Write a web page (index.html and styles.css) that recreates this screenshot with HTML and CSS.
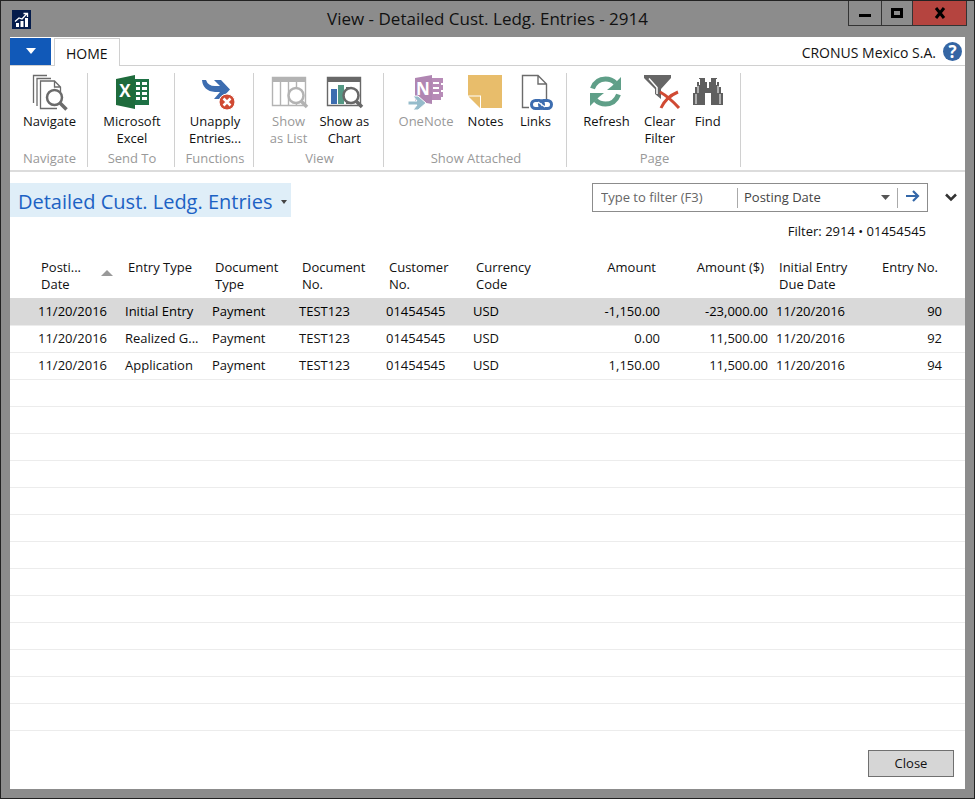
FILE: index.html
```html
<!DOCTYPE html>
<html lang="en">
<head>
  <meta charset="UTF-8">
  <meta name="viewport" content="width=device-width, initial-scale=1.0">
  <title>View - Detailed Cust. Ledg. Entries - 2914</title>
  <link rel="stylesheet" href="styles.css">
</head>
<body>
  <header class="titlebar">
    <svg class="app-icon" viewBox="0 0 19 19">
      <rect width="19" height="19" fill="#051c4b"/>
      <path d="M4 17v-4h3v4zM8.500 17v-6h3v6zM13 17V8h3v9z" fill="#fff"/>
      <path d="M3 11.500L7 8l3 1 5-5.500M11.500 3.500H15.500V7" fill="none" stroke="#fff" stroke-width="1.300"/>
    </svg>
    <h1>View - Detailed Cust. Ledg. Entries - 2914</h1>
    <div class="window-buttons">
      <button aria-label="Minimize"><svg width="12" height="8"><path d="M0 5h12v3H0z"/></svg></button>
      <button class="maximize" aria-label="Maximize"><svg width="12" height="10"><path d="M1.500 1.500h9v7h-9z" fill="none" stroke="#000" stroke-width="3"/></svg></button>
      <button class="close-x" aria-label="Close window"><svg width="10" height="10"><path d="M1 0l8 10M9 0L1 10" stroke="#000" stroke-width="3"/></svg></button>
    </div>
  </header>

  <main class="window">
    <nav class="tabs">
      <button class="app-menu" aria-label="Application menu"><svg width="10" height="6"><path d="M0 0h10L5 6z" fill="#fff"/></svg></button>
      <button class="tab">HOME</button>
      <span class="company">CRONUS Mexico S.A.</span>
      <button class="help" aria-label="Help">?</button>
    </nav>

    <div class="ribbon">
      <section class="group">
        <div class="tools">
          <button>
            <svg class="icon" viewBox="0 0 36 36" fill="none" stroke="#6b6b6b" stroke-width="1.300">
              <path d="M2.500 29V1.500H16M6 32V4.500H20M26 34.500H9.500V7H23.500L29.500 13V18M23.500 7V13H29.500"/>
              <circle cx="23.500" cy="23.500" r="7.500" fill="#fff" stroke-width="2.500"/>
              <path d="M29 29l6.500 6.500" stroke-width="3.500"/>
            </svg>
            Navigate
          </button>
        </div>
        <h2>Navigate</h2>
      </section>

      <section class="group">
        <div class="tools">
          <button>
            <svg class="icon" viewBox="0 0 36 36">
              <path d="M21 5h14v26H21z" fill="#1e7145"/>
              <path d="M22 8h4v3h-4zM28 8h5v3h-5zM22 13h4v3h-4zM28 13h5v3h-5zM22 18h4v3h-4zM28 18h5v3h-5zM22 23h4v3h-4zM28 23h5v3h-5z" fill="#fff"/>
              <path d="M2 5L21 1V35L2 31z" fill="#1e6b3c"/>
              <text x="11" y="23" class="letter">X</text>
            </svg>
            Microsoft<br>Excel
          </button>
        </div>
        <h2>Send To</h2>
      </section>

      <section class="group">
        <div class="tools">
          <button>
            <svg class="icon" viewBox="0 0 36 36">
              <path d="M5 6h4q2 6 9 6h5l-6-6h7l9 9.500-9 9.500h-7l6-7h-5Q6 17 5 6z" fill="#3d6db0"/>
              <circle cx="30" cy="28" r="8" fill="#d04a33" stroke="#fff"/>
              <path d="M26.500 24.500l7 7M33.500 24.500l-7 7" stroke="#fff" stroke-width="2.500"/>
            </svg>
            Unapply<br>Entries...
          </button>
        </div>
        <h2>Functions</h2>
      </section>

      <section class="group">
        <div class="tools">
          <button disabled>
            <svg class="icon" viewBox="0 0 36 36" fill="none" stroke="#b3b3b3">
              <path d="M1.500 3.500h33v28h-33zM9.500 8v23M17.500 8v23M25.500 8v23" stroke-width="1.400"/>
              <path d="M1 3h34v5H1z" fill="#b3b3b3" stroke="none"/>
              <circle cx="25" cy="21.500" r="7.500" fill="#fff" stroke-width="2.500"/>
              <path d="M30 27l6 6" stroke-width="3.500"/>
            </svg>
            Show<br>as List
          </button>
          <button>
            <svg class="icon" viewBox="0 0 36 36" fill="none" stroke="#686868">
              <path d="M1.500 3.500h33v28h-33z" stroke-width="1.400"/>
              <path d="M1 3h34v5H1z" fill="#686868" stroke="none"/>
              <path d="M5 15h6v15H5z" fill="#3d6db0" stroke="none"/>
              <path d="M12 11h6v19h-6z" fill="#559985" stroke="none"/>
              <path d="M20 13h6v17h-6z" fill="#686868" stroke="none"/>
              <circle cx="25" cy="21.500" r="7.500" fill="#fff" stroke-width="2.500"/>
              <path d="M30 27l6 6" stroke-width="3.500"/>
            </svg>
            Show as<br>Chart
          </button>
        </div>
        <h2>View</h2>
      </section>

      <section class="group group-attached">
        <div class="tools">
          <button disabled>
            <svg class="icon" viewBox="0 0 36 36">
              <path d="M24 4h11v5h-2v2h2v5h-2v2h2v5h-2v3h-9z" fill="#b78bb7"/>
              <path d="M25 8h6v2h-6zM25 13h6v2h-6zM25 18h6v2h-6z" fill="#fff"/>
              <path d="M7 4l17-3v29L7 27z" fill="#b086b2"/>
              <text x="15" y="21" class="letter">N</text>
              <path d="M0 27h9l-4-5h5l8 7-8 7H5l4-5H0z" fill="#96bccb" stroke="#fff"/>
            </svg>
            OneNote
          </button>
          <button>
            <svg class="icon" viewBox="0 0 36 36">
              <path d="M1 1h34v33H14V21.500H1z" fill="#e8bd6b"/>
              <path d="M1.500 22.500H13V34z" fill="#e8bd6b"/>
            </svg>
            Notes
          </button>
          <button>
            <svg class="icon" viewBox="0 0 36 36" fill="none">
              <path d="M5.500 1.500H21L29.500 10V33.500H5.500zM21 1.500V10H29.500" stroke="#6b6b6b" stroke-width="1.400"/>
              <path d="M12 25h24v11H12z" fill="#fff"/>
              <g stroke="#3d6db0" stroke-width="3">
                <rect x="14.500" y="26.500" width="12" height="8" rx="4"/>
                <rect x="22.500" y="26.500" width="12" height="8" rx="4"/>
              </g>
              <path d="M21 28l7 5" stroke="#fff" stroke-width="1.300"/>
            </svg>
            Links
          </button>
        </div>
        <h2>Show Attached</h2>
      </section>

      <section class="group">
        <div class="tools">
          <button>
            <svg class="icon" viewBox="0 0 36 36">
              <g id="arc">
                <path d="M4.500 14.500Q8 5 17.500 5q6 0 10 4" fill="none" stroke="#5f9f88" stroke-width="5"/>
                <path d="M33 3v13H19l5-4 4-4z" fill="#5f9f88"/>
              </g>
              <use href="#arc" transform="rotate(180 17.500 17.500)"/>
            </svg>
            Refresh
          </button>
          <button>
            <svg class="icon" viewBox="0 0 36 36">
              <path d="M2 1h27v3L19 15v10l-6-5v-5L2 4z" fill="#666"/>
              <path d="M7 4.500l8 9v6.500" fill="none" stroke="#fff" stroke-width="1.500"/>
              <path d="M18 18q9 5 19 16M36 18Q24 23 19 34" fill="none" stroke="#d04a33" stroke-width="3"/>
            </svg>
            Clear<br>Filter
          </button>
          <button>
            <svg class="icon" viewBox="0 0 36 36">
              <path d="M9 4h6v4h2v6h2V8h2V4h6v4h2v5h2v6h2v12H21V19h-6v12H3V19h2v-6h2V8h2z" fill="#5f5f5f"/>
              <path d="M9.500 5v6M8 12v7M6 20v10M26.500 5v6M28 12v7M30 20v10" stroke="#fff" stroke-width="1" fill="none"/>
            </svg>
            Find
          </button>
        </div>
        <h2>Page</h2>
      </section>
    </div>

    <div class="page-head">
      <button class="page-title">
        Detailed Cust. Ledg. Entries
        <svg width="6" height="4"><path d="M0 0h6L3 4z" fill="#444"/></svg>
      </button>
      <form class="filter">
        <input type="text" aria-label="Type to filter" placeholder="Type to filter (F3)">
        <div class="field">
          <select aria-label="Filter field">
            <option>Posting Date</option>
            <option>Entry Type</option>
            <option>Document Type</option>
          </select>
          <svg width="9" height="5"><path d="M0 0h9L4.500 5z" fill="#555"/></svg>
        </div>
        <button type="button" aria-label="Apply filter">
          <svg width="14" height="12" fill="none" stroke="#3467a8" stroke-width="2.200"><path d="M0 6h12M7 1l5 5-5 5"/></svg>
        </button>
      </form>
      <button class="expand" aria-label="Expand filter pane">
        <svg width="12" height="9" fill="none" stroke="#333" stroke-width="2.500"><path d="M1 1.500l5 5 5-5"/></svg>
      </button>
    </div>
    <p class="filter-info">Filter: 2914 • 01454545</p>

    <table class="entries">
      <colgroup>
        <col class="gutter">
        <col span="6">
        <col class="amount" span="2">
        <col span="2">
        <col class="rest">
      </colgroup>
      <thead>
        <tr>
          <td></td>
          <th class="sorted">Posti...<br>Date <svg width="12" height="6"><path d="M0 6h12L6 0z" fill="#999"/></svg></th>
          <th>Entry Type</th>
          <th>Document<br>Type</th>
          <th>Document<br>No.</th>
          <th>Customer<br>No.</th>
          <th>Currency<br>Code</th>
          <th class="num">Amount</th>
          <th class="num">Amount ($)</th>
          <th>Initial Entry<br>Due Date</th>
          <th class="num">Entry No.</th>
          <td></td>
        </tr>
      </thead>
      <tbody>
        <tr class="selected">
          <td></td>
          <td>11/20/2016</td>
          <td>Initial Entry</td>
          <td>Payment</td>
          <td>TEST123</td>
          <td>01454545</td>
          <td>USD</td>
          <td class="num">-1,150.00</td>
          <td class="num">-23,000.00</td>
          <td>11/20/2016</td>
          <td class="num">90</td>
          <td></td>
        </tr>
        <tr>
          <td></td>
          <td>11/20/2016</td>
          <td>Realized G...</td>
          <td>Payment</td>
          <td>TEST123</td>
          <td>01454545</td>
          <td>USD</td>
          <td class="num">0.00</td>
          <td class="num">11,500.00</td>
          <td>11/20/2016</td>
          <td class="num">92</td>
          <td></td>
        </tr>
        <tr>
          <td></td>
          <td>11/20/2016</td>
          <td>Application</td>
          <td>Payment</td>
          <td>TEST123</td>
          <td>01454545</td>
          <td>USD</td>
          <td class="num">1,150.00</td>
          <td class="num">11,500.00</td>
          <td>11/20/2016</td>
          <td class="num">94</td>
          <td></td>
        </tr>
      </tbody>
    </table>
    <div class="empty-rows"></div>

    <footer>
      <button class="close-button">Close</button>
    </footer>
  </main>
</body>
</html>
```
FILE: styles.css
```css
* {
  box-sizing: border-box;
}

body {
  margin: 0;
  min-height: 100vh;
  display: flex;
  flex-direction: column;
  padding: 0 9px 9px;
  border: 1px solid #222;
  background: #8c8c8c;
  color: #111;
  font: 13px/17px "Open Sans", "Noto Sans", sans-serif;
}

h1, h2, p {
  margin: 0;
  font-weight: normal;
}

button, input, select {
  padding: 0;
  border: none;
  background: none;
  color: inherit;
  font: inherit;
}

svg {
  overflow: visible;
}

/* title bar */
.titlebar {
  height: 36px;
  display: grid;
  grid-template-columns: 1fr auto 1fr;
  align-items: center;
}

.app-icon {
  width: 19px;
  height: 19px;
  margin-left: 2px;
}

.titlebar h1 {
  font-size: 17px;
  line-height: 24px;
}

.window-buttons {
  display: flex;
  justify-self: end;
  align-self: start;
  margin-right: -2px;
  border: 1px solid #333;
  border-top: none;
}

.window-buttons button {
  width: 33px;
  height: 24px;
  display: flex;
  align-items: center;
  justify-content: center;
  border-right: 1px solid #333;
}

.window-buttons .maximize {
  width: 31px;
}

.window-buttons .close-x {
  width: 53px;
  border-right: none;
  background: #b5443f;
}

.window {
  flex: 1;
  display: flex;
  flex-direction: column;
  background: #fff;
}

/* tabs */
.tabs {
  height: 29px;
  display: flex;
  align-items: center;
  border-bottom: 1px solid #d0d0d0;
}

.app-menu {
  width: 41px;
  height: 27px;
  display: flex;
  align-items: center;
  justify-content: center;
  background: #1159b8;
}

.tab {
  align-self: flex-end;
  height: 28px;
  margin: 0 0 -1px 3px;
  padding: 2px 11px 0;
  border: 1px solid #d0d0d0;
  border-bottom: none;
  background: #fff;
  font-size: 14px;
}

.company {
  margin-left: auto;
  padding-top: 3px;
  font-size: 14px;
}

.help {
  width: 19px;
  height: 19px;
  margin: 0 3px 0 7px;
  border-radius: 50%;
  background: #3566a4;
  color: #fff;
  font-size: 17px;
  font-weight: bold;
}

/* ribbon */
.ribbon {
  display: grid;
  grid-template-columns: 78px 87px 79px 130px 183px 174px;
  padding: 7px 0 3px;
  border-bottom: 2px solid #dcdcdc;
}

.group {
  height: 94px;
  display: flex;
  flex-direction: column;
  justify-content: space-between;
  padding-left: 2px;
  border-right: 1px solid #d0d0d0;
}

.tools {
  display: flex;
  justify-content: center;
  align-items: flex-start;
  gap: 12px;
}

.group-attached .tools {
  gap: 14px;
}

.tools button {
  text-align: center;
  white-space: nowrap;
}

.tools button:disabled {
  color: #999;
}

.icon {
  display: block;
  width: 36px;
  height: 36px;
  margin: 1px auto 3px;
}

.letter {
  fill: #fff;
  font-size: 17px;
  font-weight: bold;
  text-anchor: middle;
}

.group h2 {
  color: #999;
  font-size: 13px;
  text-align: center;
}

/* page heading and filter */
.page-head {
  display: flex;
  align-items: flex-start;
  padding-top: 11px;
}

.page-title {
  height: 34px;
  padding: 3px 4px 0 8px;
  background: #dfeef8;
  color: #1c62c4;
  font-size: 20px;
  white-space: nowrap;
}

.page-title svg {
  margin-left: 3px;
  vertical-align: 5px;
}

.filter {
  width: 336px;
  height: 29px;
  display: flex;
  align-items: center;
  margin-left: auto;
  border: 1px solid #8c8c8c;
  color: #444;
}

.filter input {
  width: 144px;
  padding-left: 8px;
}

.filter input::placeholder {
  color: #666;
}

.field {
  flex: 1;
  height: 20px;
  display: flex;
  align-items: center;
  padding-right: 7px;
  border: solid #aaa;
  border-width: 0 1px;
}

.field select {
  flex: 1;
  padding-left: 6px;
  appearance: none;
}

.filter button {
  width: 29px;
  height: 20px;
}

.expand {
  width: 37px;
  height: 29px;
  padding-left: 8px;
}

.filter-info {
  padding: 6px 39px 0 0;
  text-align: right;
}

/* entries list */
.entries {
  width: 100%;
  margin-top: 19px;
  table-layout: fixed;
  border-collapse: collapse;
}

.entries col {
  width: 87px;
}

.entries .gutter {
  width: 24px;
}

.entries .amount {
  width: 108px;
}

.entries .rest {
  width: auto;
}

.entries th {
  height: 39px;
  padding: 0 8px 0 7px;
  font-weight: normal;
  text-align: left;
  vertical-align: top;
  white-space: nowrap;
}

.entries .sorted svg {
  float: right;
  margin-top: -6px;
}

.entries tbody td {
  height: 27px;
  padding: 0 4px;
  border-bottom: 1px solid #ececec;
  white-space: nowrap;
}

.entries .num {
  text-align: right;
}

.entries .selected {
  background: #d9d9d9;
  color: #000;
}

.empty-rows {
  flex: 1;
  background: repeating-linear-gradient(#fff 0 26px, #ececec 26px 27px);
}

footer {
  display: flex;
  justify-content: flex-end;
  padding: 19px 11px 12px;
}

.close-button {
  width: 86px;
  height: 27px;
  border: 1px solid #707070;
  background: #d6d6d6;
}
```
